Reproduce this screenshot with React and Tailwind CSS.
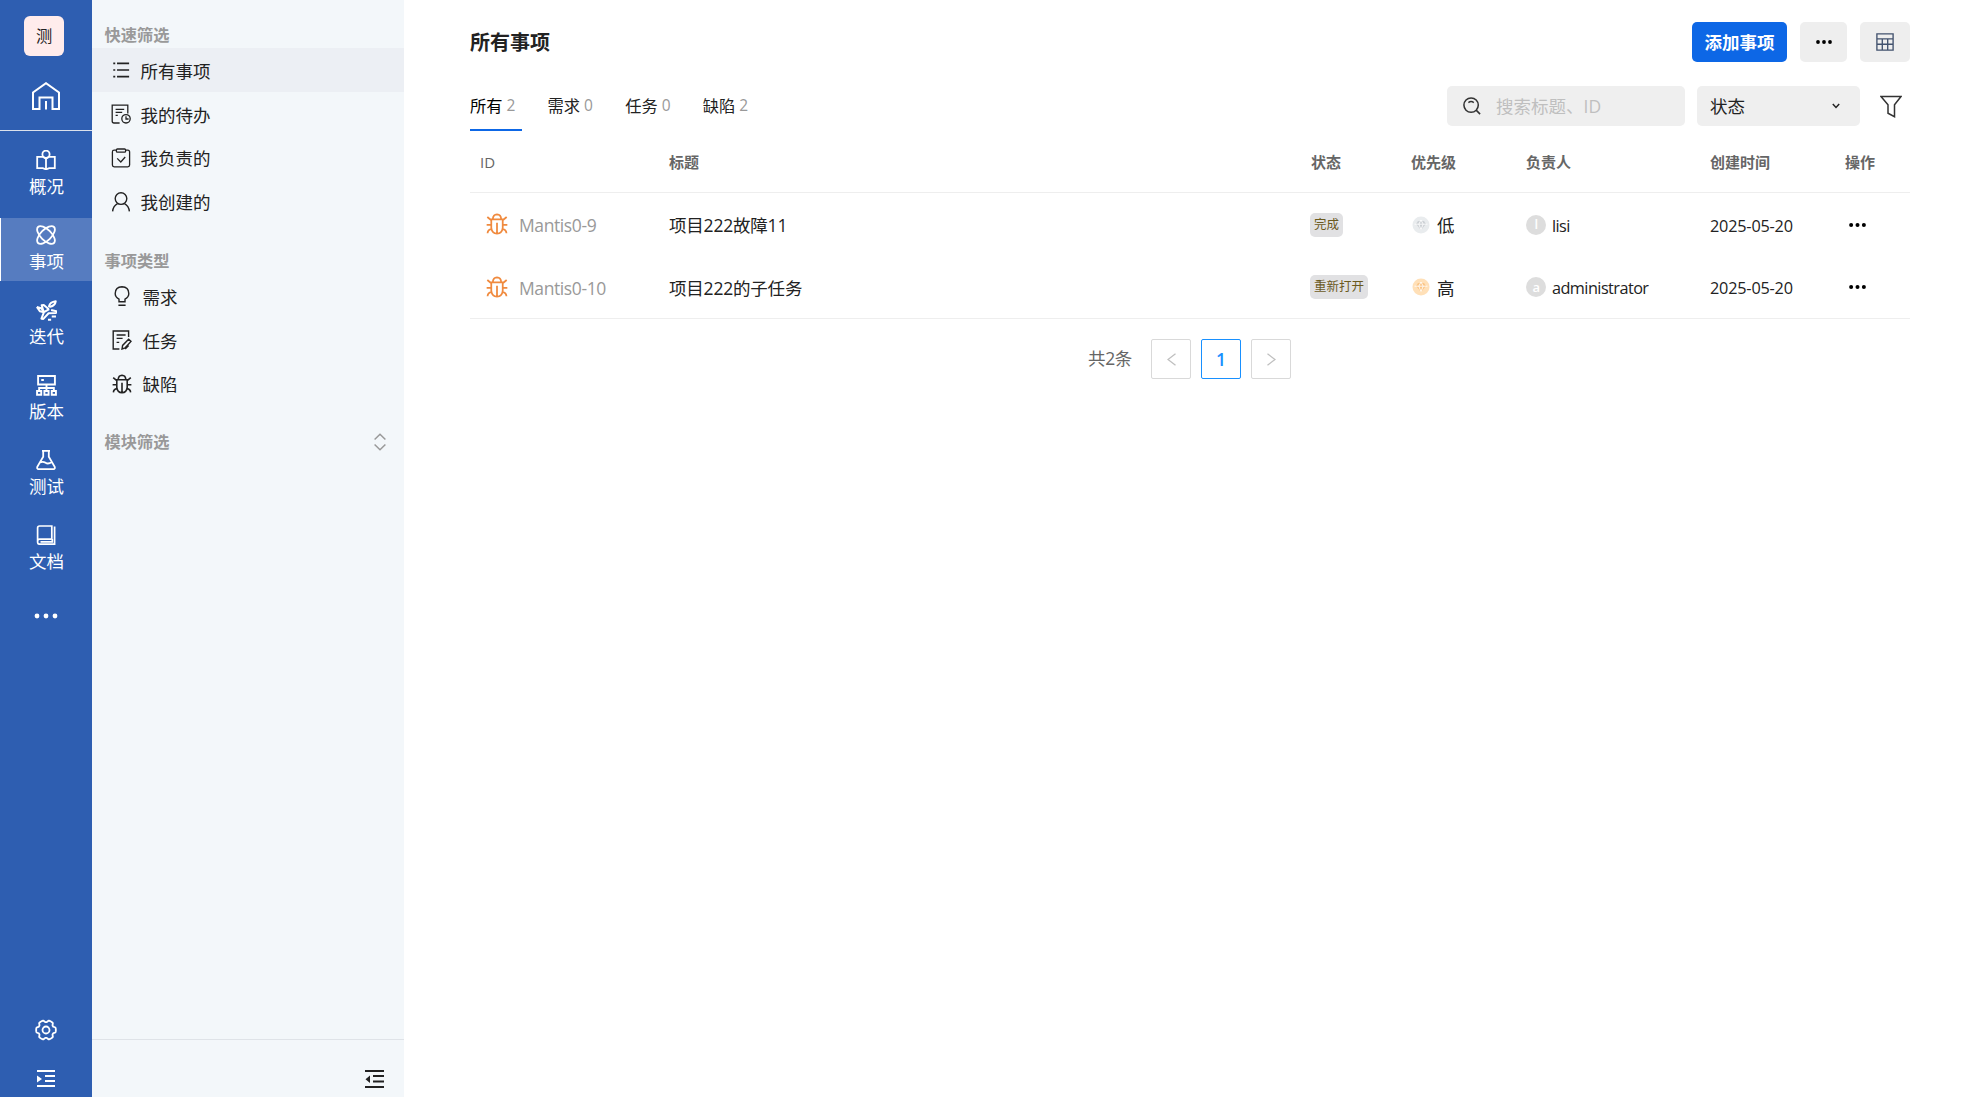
const NAV_ITEMS = [
  { label: '概况', icon: ReaderIcon },
  { label: '事项', icon: AtomIcon, active: true },
  { label: '迭代', icon: PlaneIcon },
  { label: '版本', icon: ServerIcon },
  { label: '测试', icon: FlaskIcon },
  { label: '文档', icon: BookIcon },
];

const QUICK_FILTERS = [
  { label: '所有事项', icon: ListIcon, active: true },
  { label: '我的待办', icon: TodoIcon },
  { label: '我负责的', icon: ClipboardIcon },
  { label: '我创建的', icon: UserIcon },
];

const TYPES = [
  { label: '需求', icon: BulbIcon },
  { label: '任务', icon: TaskIcon },
  { label: '缺陷', icon: BugIcon },
];

const TABS = [
  { label: '所有', count: 2, active: true },
  { label: '需求', count: 0 },
  { label: '任务', count: 0 },
  { label: '缺陷', count: 2 },
];

const ROWS = [
  { id: 'Mantis0-9', title: '项目222故障11', status: '完成', priority: '低', color: '#e9ecee', shade: '#cdd1d5', owner: 'lisi', date: '2025-05-20' },
  { id: 'Mantis0-10', title: '项目222的子任务', status: '重新打开', priority: '高', color: '#ffe0b8', shade: '#fbc688', owner: 'administrator', date: '2025-05-20' },
];

function Svg({ size = 20, sw = 1.4, children, className = '' }) {
  return (
    <svg
      width={size}
      height={size}
      viewBox="0 0 20 20"
      fill="none"
      stroke="currentColor"
      strokeWidth={sw}
      className={`shrink-0 ${className}`}
    >
      {children}
    </svg>
  );
}

function HomeIcon() {
  return (
    <svg width="28" height="28" viewBox="0 0 28 28" fill="none" stroke="currentColor" strokeWidth="2">
      <path d="M1 27V10.5L14 1.2l13 9.3V27h-6.5V15.5h-13V27z" />
      <path d="M14 19v8.5" />
    </svg>
  );
}

function ReaderIcon() {
  return (
    <Svg sw={1.8}>
      <circle cx="10" cy="4.2" r="3.6" />
      <path d="M6.8 6.8H1.2v11.4h5.6l3.2 1.2 3.2-1.2h5.6V6.8h-5.6L10 8.6zM10 8.6v10.6" />
    </Svg>
  );
}

function AtomIcon() {
  return (
    <Svg sw={1.8}>
      <ellipse cx="10" cy="10" rx="11.3" ry="5.4" transform="rotate(45 10 10)" />
      <ellipse cx="10" cy="10" rx="11.3" ry="5.4" transform="rotate(-45 10 10)" />
    </Svg>
  );
}

function PlaneIcon() {
  return (
    <Svg size={21} sw={1.9}>
      <path
        strokeLinejoin="round"
        d="M.8 6.6l3 4.2 3.8.8-2.4 6.2 1.8.2 5-5.4 7-.2.4-1.6-5-1.2M.8 6.6l4 1.2 2.2 2.4L5.4 5l2-.2 4.8 4M7.6 11.6l5-2.8M12.4 6q1-4.2 6.4-4.8-.6 4.2-5.2 5.2zM15 15.6h4M11.4 18.8h3"
      />
    </Svg>
  );
}

function ServerIcon() {
  return (
    <Svg size={21} sw={1.8}>
      <path d="M2 1h16v8H2zM5 4.8h2.5M10 9v6M3 15v-2.6h14V15" />
      <path d="M1 15.2h4v3.6H1zM8 15.2h4v3.6H8zM15 15.2h4v3.6h-4z" />
    </Svg>
  );
}

function FlaskIcon() {
  return (
    <Svg sw={1.8}>
      <path d="M6 .8h8M7.2.8v6L1.3 16.8q-.6 2.4 1.4 2.4h14.6q2 0 1.4-2.4L12.8 6.8v-6M4 12.4q3-1.4 5.6.4t6.2-.8" />
    </Svg>
  );
}

function BookIcon() {
  return (
    <Svg sw={1.7}>
      <path d="M15.8 14.2V1H3.6Q1.6 1 1.6 3v14.2q0 2 2 2h15V1.5M1.6 16.4q0-2.2 2-2.2h12.2" />
      <path d="M4.5 16.8h11.8V14" />
    </Svg>
  );
}

// six-lobed outline, sampled around the circle
const GEAR_POINTS = Array.from({ length: 72 }, (_, i) => {
  const t = (i * Math.PI) / 36;
  const r = 8.8 + 1.05 * Math.tanh(1.4 + 3 * Math.cos(6 * t));
  return `${(11 + r * Math.cos(t)).toFixed(2)},${(11 + r * Math.sin(t)).toFixed(2)}`;
}).join(' ');

function GearIcon() {
  return (
    <svg width="22" height="22" viewBox="0 0 22 22" fill="none" stroke="currentColor" strokeWidth="1.8">
      <polygon points={GEAR_POINTS} strokeLinejoin="round" />
      <circle cx="11" cy="11" r="3.5" />
    </svg>
  );
}

function ListIcon() {
  return (
    <Svg size={18} sw={1.8}>
      <path d="M5.6 2.6H19M5.6 10H19M5.6 17.4H19M1.4 2.6h2.2M1.4 10h2.2M1.4 17.4h2.2" />
    </Svg>
  );
}

function TodoIcon() {
  return (
    <Svg sw={1.3}>
      <path d="M8.6 19H3Q1.2 19 1.2 17.2V1.2h15.6v8.4M4.6 5.4h8.6M4.6 8.4h6.6M4.6 11.4h2.2" />
      <circle cx="15" cy="14.8" r="4.2" />
      <path d="M15 12.2V15h2.6" />
    </Svg>
  );
}

function ClipboardIcon() {
  return (
    <Svg sw={1.3}>
      <path d="M5.4 2.2H3.2Q1.4 2.2 1.4 4v13q0 1.8 1.8 1.8h13.6q1.8 0 1.8-1.8V4q0-1.8-1.8-1.8h-2.2" />
      <rect x="5.4" y="1" width="9.2" height="3.2" rx="1" />
      <path d="M6.2 10.4l3.6 3.6 4.4-5" />
    </Svg>
  );
}

function UserIcon() {
  return (
    <Svg sw={1.4}>
      <circle cx="10" cy="6.6" r="5.8" />
      <path d="M1.6 19.4q.6-5.6 5-7.8M18.4 19.4q-.6-5.6-5-7.8" />
    </Svg>
  );
}

function BulbIcon() {
  return (
    <Svg sw={1.4}>
      <path d="M7 15.8v-2.6Q3.2 11 3.2 7.4 3.4 1 10 .8q6.6.2 6.8 6.6 0 3.6-3.8 5.8v2.6zM6.4 19.2h7.2" />
    </Svg>
  );
}

function TaskIcon() {
  return (
    <Svg sw={1.4}>
      <path d="M16.6 7V1H1.2v18h6.2M4.6 5h9M4.6 8.4h6M4.6 12.4h2.6M10 19l.6-3.6 6-6.2 2.4 2.2-5.8 6.4zM13.2 19l3.4-3.6" />
    </Svg>
  );
}

function BugIcon({ size = 20 }) {
  return (
    <Svg size={size} sw={1.6}>
      <path d="M6.2 5.4Q6.4 1.4 10 1.2q3.6.2 3.8 4.2M4.8 5.8h10.4v7.6q-.6 5.2-5.2 5.4-4.6-.2-5.2-5.4zM10 8.8v9.6M.6 10.8h4.2M15.2 10.8h4.2M1.2 3.6l3.6 3M18.8 3.6l-3.6 3M1.4 18.4q.2-3.4 3.6-3.8M18.6 18.4q-.2-3.4-3.6-3.8" />
    </Svg>
  );
}

function DotsIcon({ width = 16, r = 1.9 }) {
  return (
    <svg width={width} height="6" viewBox="0 0 16 4" fill="currentColor">
      <circle cx="2" cy="2" r={r} />
      <circle cx="8" cy="2" r={r} />
      <circle cx="14" cy="2" r={r} />
    </svg>
  );
}

function DiamondIcon({ color, shade }) {
  return (
    <svg width="18" height="18" viewBox="0 0 18 18" fill="none">
      <circle cx="9" cy="9" r="8.5" fill={color} />
      <path d="M4 8l2-3h6l2 3-5 6z" fill={shade} />
      <path d="M2.5 8.2h13M9 4L6.8 8.2 9 13.6l2.2-5.4z" stroke="#fff" strokeOpacity=".85" />
    </svg>
  );
}

function FilterGroup({ title, items, iconPad }) {
  return (
    <div>
      <h3 className="h-[26px] pl-[12.5px] text-[16.25px] leading-[26px] font-bold text-[#999]">{title}</h3>
      {items.map(({ label, icon: Icon, active }) => (
        <div
          key={label}
          className={`flex h-[43.75px] items-center ${iconPad} ${active ? 'bg-[#eceff4]' : ''}`}
        >
          <span className="mr-[9.5px] flex w-5 justify-center pt-px"><Icon /></span>
          <span className="pt-[2px]">{label}</span>
        </div>
      ))}
    </div>
  );
}

function Rail() {
  return (
    <nav className="flex w-[92px] shrink-0 flex-col items-center bg-[#2e5eb1] text-white">
      <div className="mt-4 mr-1 flex size-10 items-center justify-center rounded-md bg-[#ffecec] text-[16.25px] text-[#222]">测</div>
      <div className="mt-[26px]"><HomeIcon /></div>
      <div className="mt-5 h-px w-full bg-[#dbe1ec]" />
      <div className="mt-3 flex w-full flex-col gap-3">
        {NAV_ITEMS.map(({ label, icon: Icon, active }) => (
          <div
            key={label}
            className={`flex h-[63px] flex-col items-center border-l pt-[7px] ${active ? 'border-white bg-[#567cc0]' : 'border-transparent'}`}
          >
            <span className="mr-px flex h-5 items-center"><Icon /></span>
            <span className="mt-1 leading-6">{label}</span>
          </div>
        ))}
      </div>
      <div className="mt-[32px]"><DotsIcon width={24} r={1.6} /></div>
      <div className="mt-auto mr-px"><GearIcon /></div>
      <svg className="mt-[29px] mr-px mb-[9px]" width="18" height="18" viewBox="0 0 18 18" fill="currentColor">
        <path d="M0 0h18v2H0zM8 5h10v2H8zM8 10h10v2H8zM0 15h18v2H0zM0 5.5l5 3.5-5 3.5z" />
      </svg>
    </nav>
  );
}

function Sidebar() {
  return (
    <aside className="flex w-[312px] shrink-0 flex-col bg-[#f3f7fa] pt-[22px]">
      <FilterGroup title="快速筛选" items={QUICK_FILTERS} iconPad="pl-[19px]" />
      <div className="mt-[25px]">
        <FilterGroup title="事项类型" items={TYPES} iconPad="gap-px pl-5" />
      </div>
      <div className="mt-[25px] flex items-center justify-between pr-[18px] pl-[12.5px] text-[16.25px] font-bold text-[#999]">
        模块筛选
        <svg width="12" height="18" viewBox="0 0 12 18" fill="none" stroke="currentColor" strokeWidth="1.5">
          <path d="M.6 6.5L6 1.2l5.4 5.3M.6 11.5L6 16.8l5.4-5.3" />
        </svg>
      </div>
      <div className="mt-auto flex h-[58px] justify-end border-t border-[#dfe3e8] pr-5">
        <svg className="mt-[30px]" width="19" height="19" viewBox="0 0 19 19" fill="currentColor">
          <path d="M0 0h19v2H0zM8 5h11v2H8zM8 10.5h11v2H8zM0 16h19v2H0zM5 5.5v7.5L.5 9.2z" />
        </svg>
      </div>
    </aside>
  );
}

function Toolbar() {
  return (
    <div className="mt-6 flex h-10 items-center">
      <div className="flex h-[46px] gap-[26px] self-start text-[16.25px]">
        {TABS.map(({ label, count, active }) => (
          <div
            key={label}
            className={`flex h-[45px] w-[51.6px] items-center gap-1 whitespace-nowrap border-b-2 pb-[3px] ${active ? 'border-[#0d67e6] text-black' : 'border-transparent'}`}
          >
            {label}
            <span className="text-[15.5px] text-[#999]">{count}</span>
          </div>
        ))}
      </div>
      <div className="ml-auto flex h-10 w-[238px] items-center rounded-[5px] bg-[#efefef] pl-4 text-[#bfbfbf]">
        <Svg size={18} sw={1.7} className="mr-[15px] text-[#333]">
          <circle cx="9" cy="9" r="8" />
          <path d="M14.6 14.6l4.4 4.4M6 6.2Q9 4 12 6.2" />
        </Svg>
        搜索标题、ID
      </div>
      <div className="ml-3 flex h-10 w-[163px] items-center justify-between rounded-[5px] bg-[#efefef] pr-5 pl-[13px]">
        状态
        <svg width="8" height="6" viewBox="0 0 8 6" fill="none" stroke="currentColor" strokeWidth="1.5">
          <path d="M.8 1L4 4.4 7.2 1" />
        </svg>
      </div>
      <svg className="mr-2 ml-5" width="22" height="23" viewBox="0 0 22 23" fill="none" stroke="#333" strokeWidth="1.5">
        <path d="M1 1.5h20l-6.5 8.2v12L8 18.2V9.7z" />
      </svg>
    </div>
  );
}

function IssueTable() {
  const grid = 'grid grid-cols-[199px_641px_101px_115px_184px_135px_1fr] items-center';

  return (
    <div>
      <div className={`${grid} h-[67px] border-b border-[#eee] pt-1.5 text-[15px] font-semibold text-[#666]`}>
        <span className="pl-2.5 font-medium">ID</span>
        <span>标题</span>
        <span className="pl-px">状态</span>
        <span>优先级</span>
        <span>负责人</span>
        <span>创建时间</span>
        <span>操作</span>
      </div>
      <div className="border-b border-[#eee]">
        {ROWS.map((row) => (
          <div key={row.id} className={`${grid} h-[62.5px]`}>
            <span className="flex items-center pl-4 tracking-[-0.4px] text-[#999]">
              <span className="mr-[11px] text-[#f08a3e]"><BugIcon size={22} /></span>
              <span className="pt-[2px]">{row.id}</span>
            </span>
            <span className="pt-[2px] tracking-[-0.2px]">{row.title}</span>
            <span className="flex pt-px">
              <span className="flex h-6 items-center rounded-[5px] bg-[#e1e1e3] px-1 pt-px text-[12.5px] text-[#6b5a1e]">
                {row.status}
              </span>
            </span>
            <span className="flex items-center gap-[7px] pl-px">
              <span className="pt-px"><DiamondIcon color={row.color} shade={row.shade} /></span>
              <span className="pt-[2px]">{row.priority}</span>
            </span>
            <span className="flex items-center gap-1.5 text-[16.25px] tracking-[-0.55px]">
              <span className="mt-px flex size-5 items-center justify-center rounded-full bg-[#ddd] text-[13px] leading-none font-semibold text-white">
                {row.owner[0]}
              </span>
              <span className="pt-[3px]">{row.owner}</span>
            </span>
            <span className="pt-[3px] text-[16.25px] tracking-[-0.2px]">{row.date}</span>
            <span className="pt-px pl-1 text-black"><DotsIcon width={17} /></span>
          </div>
        ))}
      </div>
    </div>
  );
}

function Pagination() {
  return (
    <div className="mt-5 flex items-center justify-center pr-px text-[#666]">
      <span className="mr-[19px] pb-[2px] tracking-[-0.3px]">共2条</span>
      <div className="flex gap-2.5">
        <button className="flex size-10 items-center justify-center rounded-xs border border-[#d9d9d9] text-[#bfbfbf]">
          <svg width="9" height="13" viewBox="0 0 9 13" fill="none" stroke="currentColor" strokeWidth="1.3"><path d="M8.5.8L1 6.5l7.5 5.7" /></svg>
        </button>
        <button className="flex size-10 items-center justify-center rounded-xs border border-[#1890ff] font-semibold text-[#1890ff]">1</button>
        <button className="flex size-10 items-center justify-center rounded-xs border border-[#d9d9d9] text-[#bfbfbf]">
          <svg width="9" height="13" viewBox="0 0 9 13" fill="none" stroke="currentColor" strokeWidth="1.3"><path d="M.5.8L8 6.5.5 12.2" /></svg>
        </button>
      </div>
    </div>
  );
}

export default function App() {
  return (
    <div className="flex h-[1097px] w-[1979px] overflow-hidden bg-white font-['Open_Sans','Noto_Sans_CJK_SC',sans-serif] text-[17.5px] leading-normal text-[#222]">
      <Rail />
      <Sidebar />
      <main className="min-w-0 flex-1 pt-[22px] pr-[69px] pl-[66px]">
        <header className="flex h-10 items-center">
          <h1 className="pt-[2px] text-xl font-bold">所有事项</h1>
          <button className="ml-auto h-10 w-[95px] rounded-[5px] bg-[#0d67e6] font-bold text-white">添加事项</button>
          <button className="ml-[13px] flex h-10 w-[47px] items-center justify-center rounded-[5px] bg-[#eee] text-black">
            <DotsIcon width={16} />
          </button>
          <button className="ml-[13px] flex h-10 w-[50px] items-center justify-center rounded-[5px] bg-[#eee] text-[#42526e]">
            <Svg size={18} sw={1.5}>
              <path d="M1 1h18v18H1zM1 6.5h18M1 12.5h18M7 6.5V19M13 6.5V19" />
            </Svg>
          </button>
        </header>
        <Toolbar />
        <IssueTable />
        <Pagination />
      </main>
    </div>
  );
}
